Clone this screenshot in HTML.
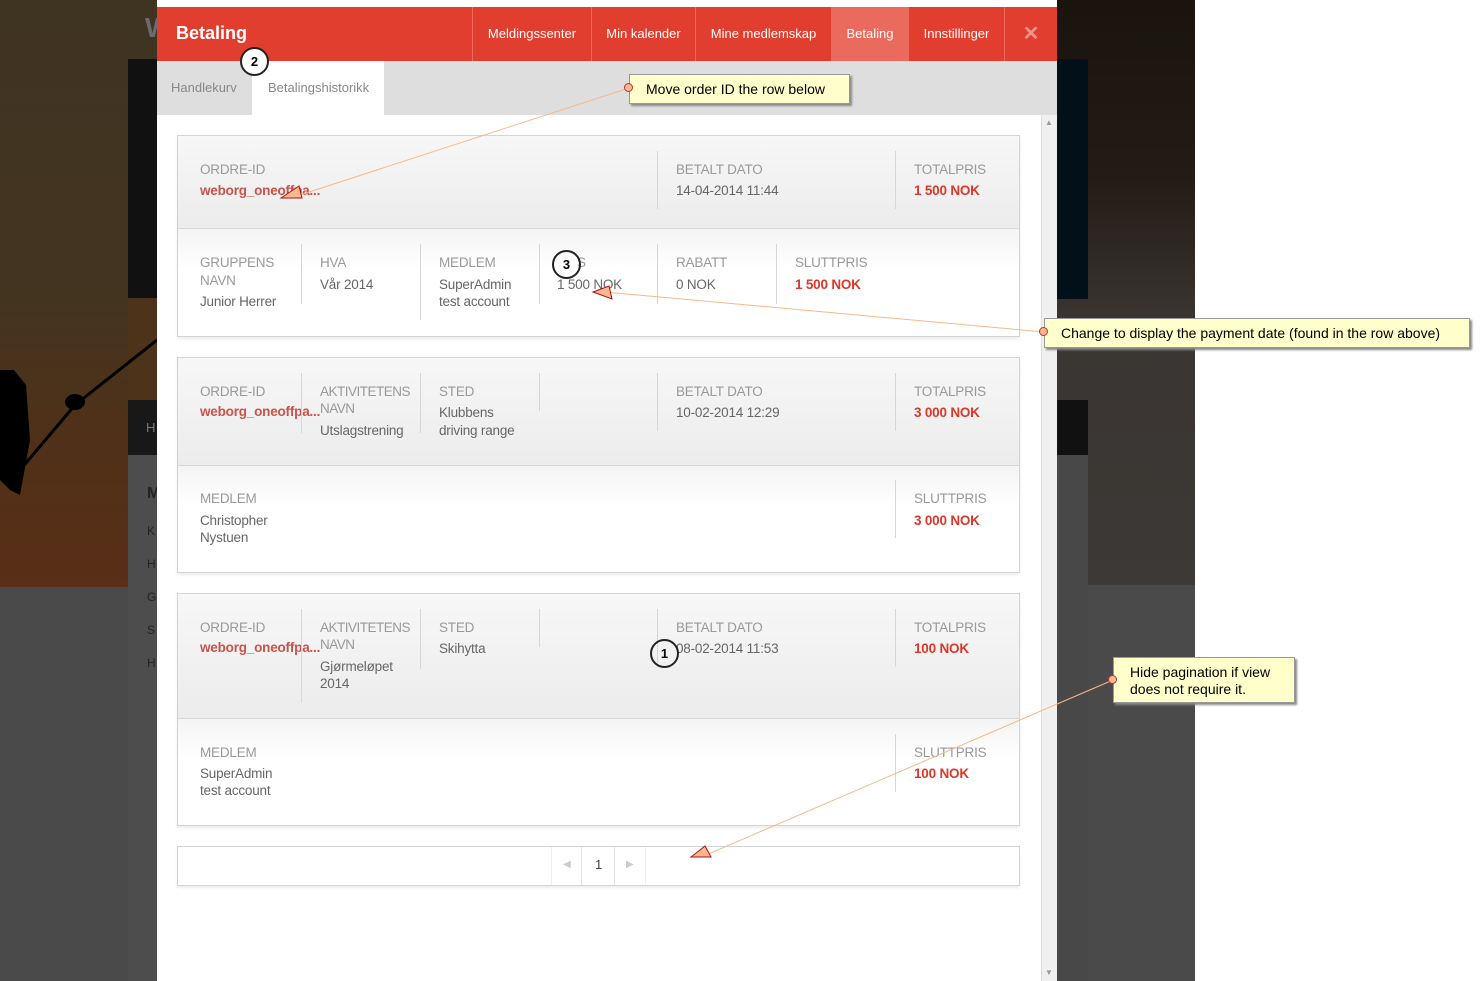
<!DOCTYPE html>
<html><head><meta charset="utf-8"><style>
*{margin:0;padding:0;box-sizing:border-box}
body{width:1483px;height:981px;position:relative;overflow:hidden;background:#fff;font-family:"Liberation Sans",sans-serif}
.a{position:absolute}
.l{position:absolute;font-size:13.5px;line-height:18px;color:#999;letter-spacing:-0.2px}
.v{position:absolute;font-size:13.5px;line-height:18px;color:#666;letter-spacing:-0.2px}
.r{position:absolute;font-size:13.5px;line-height:18px;color:#d9382a;font-weight:bold;letter-spacing:-0.2px}
.o{color:#c9534a}
.div{position:absolute;width:1px;background:#d6d6d6}
.card{position:absolute;left:177px;width:843px;border:1px solid #d4d4d4;box-shadow:0 2px 3px rgba(0,0,0,.08)}
.hd{background:linear-gradient(#f7f7f7,#ececec);border-bottom:1px solid #d8d8d8}
.bd{background:linear-gradient(#f4f4f4,#fff 40px)}
.note{position:absolute;background:#ffffcc;border:1px solid #999;box-shadow:2px 2px 2px #888;font-size:14px;line-height:17px;color:#000;font-family:"Liberation Sans",sans-serif}
.dot{position:absolute;width:9px;height:9px;border-radius:50%;background:#fbb890;border:1px solid #b33}
.circ{position:absolute;width:29px;height:29px;border-radius:50%;border:2px solid #222;background:transparent;font-size:13px;text-align:center;line-height:25px;color:#000;font-weight:bold}
.nav{position:absolute;top:7px;height:54px;line-height:54px;color:#fff;font-size:13px;text-align:center;border-left:1px solid #ee6a5c}
</style></head><body>
<div class="a" style="left:0;top:0;width:128px;height:587px;background:linear-gradient(#3f3322 0,#433420 300px,#4e3118 420px,#5a2e17 587px)"></div>
<div class="a" style="left:128px;top:0;width:29px;height:59px;background:#3f3322"></div>
<div class="a" style="left:128px;top:59px;width:29px;height:240px;background:#111"></div>
<div class="a" style="left:128px;top:298px;width:29px;height:102px;background:#4c3319"></div>
<div class="a" style="left:128px;top:400px;width:29px;height:55px;background:#181818"></div>
<div class="a" style="left:128px;top:455px;width:29px;height:526px;background:#4d4d4d"></div>
<div class="a" style="left:0;top:587px;width:128px;height:394px;background:#4a4a4a"></div>
<div class="a" style="left:145px;top:12px;color:#6a6a70;font-size:28px;font-weight:bold">W</div>
<div class="a" style="left:146px;top:420px;color:#777;font-size:13px">H</div>
<div class="a" style="left:147px;top:485px;color:#222;font-size:16px;font-weight:bold">M</div>
<div class="a" style="left:147px;top:524px;color:#222;font-size:12px">K</div>
<div class="a" style="left:147px;top:557px;color:#222;font-size:12px">H</div>
<div class="a" style="left:147px;top:590px;color:#222;font-size:12px">G</div>
<div class="a" style="left:147px;top:623px;color:#222;font-size:12px">S</div>
<div class="a" style="left:147px;top:656px;color:#222;font-size:12px">H</div>
<svg class="a" style="left:0;top:330px" width="157" height="170"><path d="M157 10 L75 75 L20 140" stroke="#000" stroke-width="3" fill="none"/><ellipse cx="75" cy="72" rx="10" ry="8" fill="#000"/><path d="M0 40 L14 40 L26 55 L30 110 L20 165 L10 160 L0 150Z" fill="#000"/></svg>
<div class="a" style="left:1057px;top:0;width:138px;height:585px;background:linear-gradient(#1a140e,#231c16 180px,#3a3532 320px,#3c3936 585px)"></div>
<div class="a" style="left:1057px;top:59px;width:31px;height:240px;background:#02101a"></div>
<div class="a" style="left:1057px;top:400px;width:31px;height:55px;background:#111"></div>
<div class="a" style="left:1057px;top:455px;width:31px;height:526px;background:#484848"></div>
<div class="a" style="left:1088px;top:585px;width:107px;height:396px;background:#4a4a4a"></div>
<div class="a" style="left:157px;top:7px;width:900px;height:54px;background:#e23e2f"></div>
<div class="a" style="left:176px;top:23px;color:#fff;font-size:18px;font-weight:bold">Betaling</div>
<div class="nav" style="left:472px;width:119px">Meldingssenter</div>
<div class="nav" style="left:591px;width:104px">Min kalender</div>
<div class="nav" style="left:695px;width:136px">Mine medlemskap</div>
<div class="nav" style="left:831px;width:78px;background:#ea6b5e;border-left:none">Betaling</div>
<div class="nav" style="left:909px;width:95px;border-left:none">Innstillinger</div>
<div class="nav" style="left:1004px;width:53px;font-size:20px;color:#f0948a;font-weight:bold">✕</div>
<div class="a" style="left:157px;top:61px;width:900px;height:54px;background:#dedede"></div>
<div class="a" style="left:171px;top:80px;color:#888;font-size:13px">Handlekurv</div>
<div class="a" style="left:252px;top:61px;width:132px;height:54px;background:#fff"></div>
<div class="a" style="left:268px;top:80px;color:#888;font-size:13px">Betalingshistorikk</div>
<div class="a" style="left:157px;top:115px;width:884px;height:866px;background:#fff"></div>
<div class="a" style="left:1041px;top:115px;width:16px;height:866px;background:#f0f0f0;border-left:1px solid #ddd"></div>
<div class="a" style="left:1045px;top:118px;color:#999;font-size:8px">▲</div>
<div class="a" style="left:1045px;top:968px;color:#999;font-size:8px">▼</div>

<div class="card" style="top:135px;height:202px"><div class="hd" style="height:93px"></div><div class="bd" style="height:107px"></div></div>
<div class="l" style="left:200px;top:161px">ORDRE-ID</div><div class="r o" style="left:200px;top:182px">weborg_oneoffpa...</div>
<div class="div" style="left:657px;top:151px;height:58px"></div>
<div class="l" style="left:676px;top:161px">BETALT DATO</div><div class="v" style="left:676px;top:182px">14-04-2014 11:44</div>
<div class="div" style="left:895px;top:151px;height:58px"></div>
<div class="l" style="left:914px;top:161px">TOTALPRIS</div><div class="r" style="left:914px;top:182px">1 500 NOK</div>
<div class="l" style="left:200px;top:254px">GRUPPENS<br>NAVN</div><div class="v" style="left:200px;top:293px">Junior Herrer</div>
<div class="div" style="left:301px;top:244px;height:60px"></div>
<div class="l" style="left:320px;top:254px">HVA</div><div class="v" style="left:320px;top:276px">Vår 2014</div>
<div class="div" style="left:420px;top:244px;height:76px"></div>
<div class="l" style="left:439px;top:254px">MEDLEM</div><div class="v" style="left:439px;top:276px;line-height:17px">SuperAdmin<br>test account</div>
<div class="div" style="left:539px;top:244px;height:60px"></div>
<div class="l" style="left:577px;top:254px">S</div><div class="v" style="left:557px;top:276px">1 500 NOK</div>
<div class="div" style="left:657px;top:244px;height:60px"></div>
<div class="l" style="left:676px;top:254px">RABATT</div><div class="v" style="left:676px;top:276px">0 NOK</div>
<div class="div" style="left:776px;top:244px;height:60px"></div>
<div class="l" style="left:795px;top:254px">SLUTTPRIS</div><div class="r" style="left:795px;top:276px">1 500 NOK</div>

<div class="card" style="top:357px;height:216px"><div class="hd" style="height:108px"></div><div class="bd" style="height:106px"></div></div>
<div class="l" style="left:200px;top:383px">ORDRE-ID</div><div class="r o" style="left:200px;top:403px">weborg_oneoffpa...</div>
<div class="div" style="left:301px;top:373px;height:60px"></div>
<div class="l" style="left:320px;top:383px;line-height:17px;letter-spacing:-0.5px">AKTIVITETENS<br>NAVN</div><div class="v" style="left:320px;top:422px">Utslagstrening</div>
<div class="div" style="left:420px;top:373px;height:60px"></div>
<div class="l" style="left:439px;top:383px">STED</div><div class="v" style="left:439px;top:404px;line-height:18px">Klubbens<br>driving range</div>
<div class="div" style="left:539px;top:373px;height:38px"></div>
<div class="div" style="left:657px;top:373px;height:58px"></div>
<div class="l" style="left:676px;top:383px">BETALT DATO</div><div class="v" style="left:676px;top:404px">10-02-2014 12:29</div>
<div class="div" style="left:895px;top:373px;height:58px"></div>
<div class="l" style="left:914px;top:383px">TOTALPRIS</div><div class="r" style="left:914px;top:404px">3 000 NOK</div>
<div class="l" style="left:200px;top:490px">MEDLEM</div><div class="v" style="left:200px;top:512px;line-height:17px">Christopher<br>Nystuen</div>
<div class="div" style="left:895px;top:480px;height:58px"></div>
<div class="l" style="left:914px;top:490px">SLUTTPRIS</div><div class="r" style="left:914px;top:512px">3 000 NOK</div>

<div class="card" style="top:593px;height:233px"><div class="hd" style="height:125px"></div><div class="bd" style="height:106px"></div></div>
<div class="l" style="left:200px;top:619px">ORDRE-ID</div><div class="r o" style="left:200px;top:639px">weborg_oneoffpa...</div>
<div class="div" style="left:301px;top:609px;height:94px"></div>
<div class="l" style="left:320px;top:619px;line-height:17px;letter-spacing:-0.5px">AKTIVITETENS<br>NAVN</div><div class="v" style="left:320px;top:658px;line-height:17px">Gjørmeløpet<br>2014</div>
<div class="div" style="left:420px;top:609px;height:60px"></div>
<div class="l" style="left:439px;top:619px">STED</div><div class="v" style="left:439px;top:640px">Skihytta</div>
<div class="div" style="left:539px;top:609px;height:38px"></div>
<div class="div" style="left:657px;top:609px;height:58px"></div>
<div class="l" style="left:676px;top:619px">BETALT DATO</div><div class="v" style="left:676px;top:640px">08-02-2014 11:53</div>
<div class="div" style="left:895px;top:609px;height:58px"></div>
<div class="l" style="left:914px;top:619px">TOTALPRIS</div><div class="r" style="left:914px;top:640px">100 NOK</div>
<div class="l" style="left:200px;top:744px">MEDLEM</div><div class="v" style="left:200px;top:765px;line-height:17px">SuperAdmin<br>test account</div>
<div class="div" style="left:895px;top:734px;height:58px"></div>
<div class="l" style="left:914px;top:744px">SLUTTPRIS</div><div class="r" style="left:914px;top:765px">100 NOK</div>

<div class="card" style="top:846px;height:40px;background:#fff"></div>
<div class="a" style="left:551px;top:847px;width:95px;height:38px;border-left:1px solid #eee;border-right:1px solid #eee"></div>
<div class="a" style="left:581px;top:847px;width:1px;height:38px;background:#e4e4e4"></div>
<div class="a" style="left:614px;top:847px;width:1px;height:38px;background:#e4e4e4"></div>
<div class="a" style="left:563px;top:859px;color:#ccc;font-size:10px">◀</div>
<div class="a" style="left:595px;top:857px;color:#444;font-size:13px">1</div>
<div class="a" style="left:626px;top:859px;color:#ccc;font-size:10px">▶</div>

<svg class="a" style="left:0;top:0" width="1483" height="981">
<g stroke="#f4b98a" stroke-width="1" fill="none">
<line x1="629" y1="88" x2="300" y2="195"/>
<line x1="1044" y1="332" x2="605" y2="292"/>
<line x1="1113" y1="680" x2="706" y2="855"/>
</g>
<g fill="#fbb890" stroke="#a11" stroke-width="1">
<path d="M281 198 L299 186 L302 198Z"/>
<path d="M593 292 L609 286 L612 299Z"/>
<path d="M691 857 L705 846 L711 857Z"/>
</g>
</svg>
<div class="note" style="left:629px;top:74px;width:221px;height:30px;padding:6px 0 0 16px">Move order ID the row below</div>
<div class="dot" style="left:624px;top:83px"></div>
<div class="note" style="left:1044px;top:318px;width:426px;height:30px;padding:6px 0 0 16px">Change to display the payment date (found in the row above)</div>
<div class="dot" style="left:1039px;top:327px"></div>
<div class="note" style="left:1113px;top:657px;width:182px;height:46px;padding:6px 0 0 16px">Hide pagination if view<br>does not require it.</div>
<div class="dot" style="left:1108px;top:675px"></div>
<div class="circ" style="left:240px;top:47px;background:#fff">2</div>
<div class="circ" style="left:552px;top:250px">3</div>
<div class="circ" style="left:650px;top:639px">1</div>
</body></html>
